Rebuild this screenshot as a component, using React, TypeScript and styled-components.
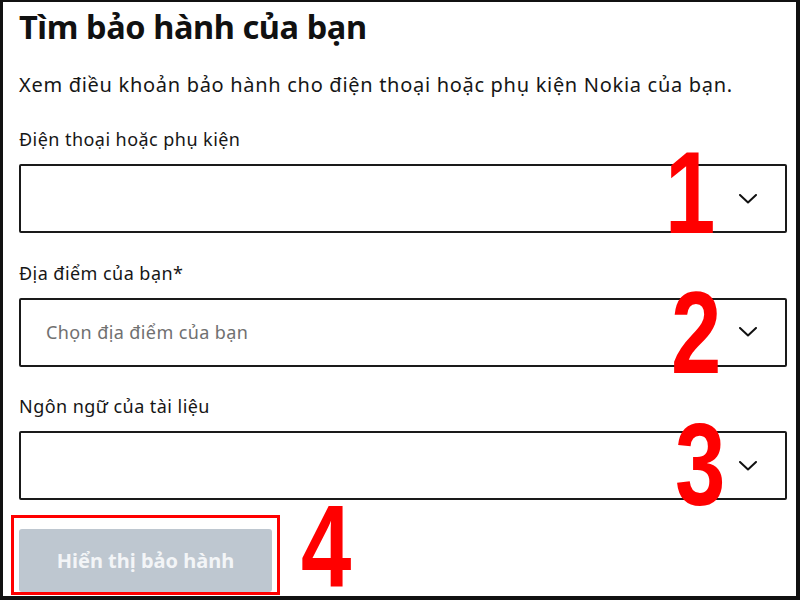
import styled, { createGlobalStyle } from 'styled-components';

const GlobalStyle = createGlobalStyle`
  html, body {
    margin: 0;
    padding: 0;
    background: #ffffff;
  }
  body {
    font-family: 'Noto Sans', 'Open Sans', sans-serif;
    color: #111111;
  }
`;

const fields = [
  { label: 'Điện thoại hoặc phụ kiện', placeholder: '' },
  { label: 'Địa điểm của bạn*', placeholder: 'Chọn địa điểm của bạn' },
  { label: 'Ngôn ngữ của tài liệu', placeholder: '' },
];

// red step numbers drawn over the form
const markers = [
  { text: '1', x: 662, y: 149 },
  { text: '2', x: 668, y: 289 },
  { text: '3', x: 672, y: 421 },
  { text: '4', x: 298, y: 502 },
];

function Chevron() {
  return (
    <svg width="18" height="10" viewBox="0 0 18 10" fill="none">
      <polyline
        points="1,1 9,8.5 17,1"
        stroke="#111"
        strokeWidth="2"
        strokeLinecap="round"
        strokeLinejoin="round"
      />
    </svg>
  );
}

export default function App() {
  return (
    <>
      <GlobalStyle />
      <Frame>
        <Title>Tìm bảo hành của bạn</Title>
        <Intro>
          Xem điều khoản bảo hành cho điện thoại hoặc phụ kiện Nokia của bạn.
        </Intro>
        <Form>
          {fields.map((f) => (
            <Field key={f.label}>
              <Label>{f.label}</Label>
              <Select>
                <Placeholder>{f.placeholder}</Placeholder>
                <Chevron />
              </Select>
            </Field>
          ))}
          <SubmitButton disabled>Hiển thị bảo hành</SubmitButton>
        </Form>
        <Highlight />
        {markers.map((m) => (
          <Marker key={m.text} $x={m.x} $y={m.y}>
            {m.text}
          </Marker>
        ))}
      </Frame>
    </>
  );
}

const Frame = styled.div`
  position: relative;
  box-sizing: border-box;
  width: 800px;
  height: 600px;
  border-style: solid;
  border-color: #111111;
  border-width: 2px 4px 4px 3px;
  padding: 5px 9px 0 16px;
`;

const Title = styled.h1`
  margin: 0;
  font-size: 32.5px;
  line-height: 40px;
  font-weight: 700;
  letter-spacing: -0.4px;
`;

const Intro = styled.p`
  margin: 26px 0 0;
  font-size: 20px;
  line-height: 24px;
  letter-spacing: 0.7px;
  color: #161616;
`;

const Form = styled.div`
  margin-top: 31px;
  display: flex;
  flex-direction: column;
`;

const Field = styled.div`
  display: flex;
  flex-direction: column;
  gap: 14px;
  margin-bottom: 28.5px;
`;

const Label = styled.label`
  font-size: 18px;
  line-height: 22px;
  letter-spacing: 0.45px;
  color: #161616;
`;

const Select = styled.div`
  box-sizing: border-box;
  height: 69px;
  display: flex;
  align-items: center;
  justify-content: space-between;
  padding: 0 28px 0 25px;
  border: 2px solid #1a1a1a;
  border-radius: 2px;
`;

const Placeholder = styled.span`
  font-size: 18px;
  letter-spacing: 0.4px;
  color: #707070;
`;

const SubmitButton = styled.button`
  width: 253px;
  height: 63px;
  border: none;
  border-radius: 3px;
  background: #bec7d0;
  color: #f3f5f7;
  font-family: 'Noto Sans', 'Open Sans', sans-serif;
  font-size: 20px;
  font-weight: 700;
`;

const Highlight = styled.div`
  position: absolute;
  left: 8px;
  top: 513px;
  width: 263px;
  height: 74px;
  border: 3px solid #ff0000;
`;

const Marker = styled.div<{ $x: number; $y: number }>`
  position: absolute;
  left: ${(p) => p.$x}px;
  top: ${(p) => p.$y}px;
  height: 84px;
  font-family: 'Liberation Sans', Arial, sans-serif;
  font-size: 116px;
  line-height: 84px;
  font-weight: 700;
  color: #ff0000;
  transform: scaleX(0.78);
  transform-origin: left top;
`;
